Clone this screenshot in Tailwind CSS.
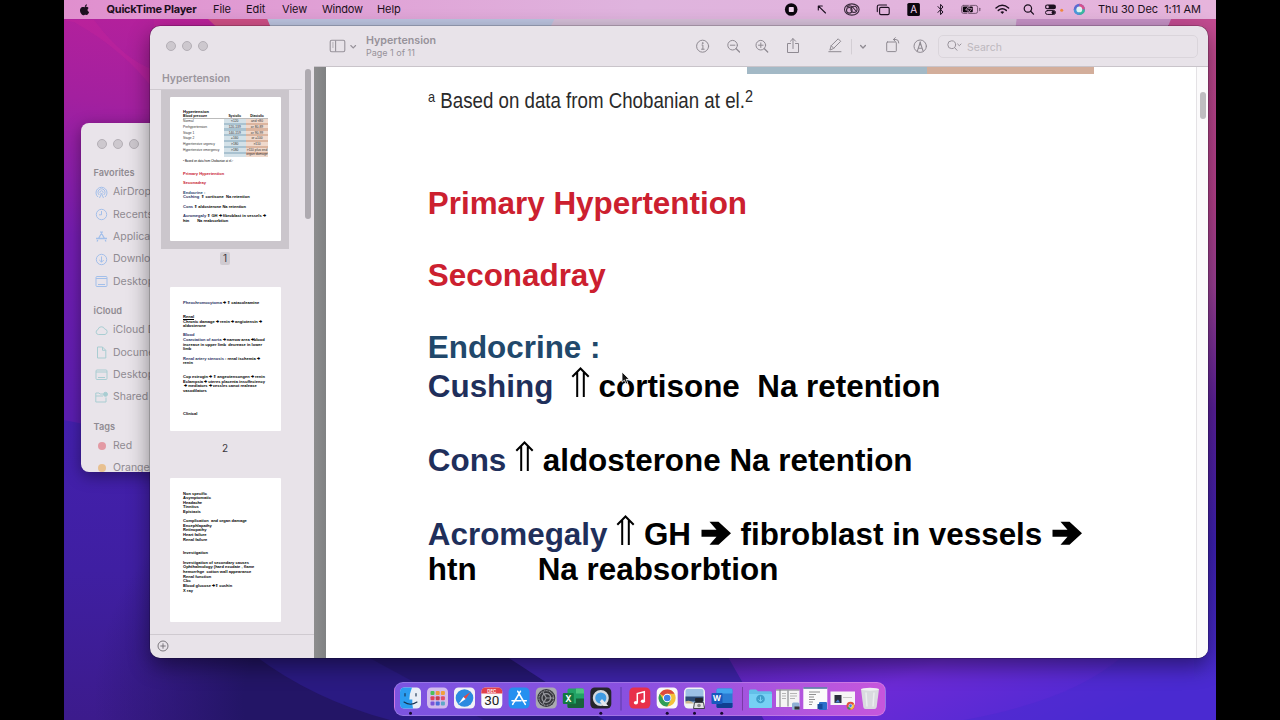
<!DOCTYPE html>
<html lang="en">
<head>
  <meta charset="UTF-8" />
  <meta name="viewport" content="width=device-width, initial-scale=1.0"/>
  <title>Hypertension</title>
  <script src="https://cdn.jsdelivr.net/npm/@tailwindcss/browser@4"></script>
</head>
<body class="bg-black w-[1280px] h-[720px] overflow-hidden font-['Inter',sans-serif]">

  <div class="relative w-[1152px] h-[720px] mx-auto overflow-hidden">

    <!-- Wallpaper -->
    <svg class="absolute inset-0" width="1152" height="720" viewBox="0 0 1152 720">
      <defs>
        <linearGradient id="left" x1="0.5" y1="0" x2="0.3" y2="1">
          <stop offset="0" stop-color="#bd219a"/>
          <stop offset="0.3" stop-color="#a3209f"/>
          <stop offset="0.6" stop-color="#741db0"/>
          <stop offset="1" stop-color="#5a1eb0"/>
        </linearGradient>
        <linearGradient id="low" x1="0" y1="0" x2="0" y2="1">
          <stop offset="0" stop-color="#4420ae"/>
          <stop offset="0.5" stop-color="#3f1fa2"/>
          <stop offset="1" stop-color="#3c1b8c"/>
        </linearGradient>
        <radialGradient id="shade" gradientUnits="userSpaceOnUse" cx="260" cy="700" r="230">
          <stop offset="0.35" stop-color="#231566" stop-opacity="1"/>
          <stop offset="1" stop-color="#231566" stop-opacity="0"/>
        </radialGradient>
        <linearGradient id="right" x1="0" y1="0" x2="0" y2="1">
          <stop offset="0" stop-color="#c34b91"/>
          <stop offset="0.3" stop-color="#b53f8c"/>
          <stop offset="0.42" stop-color="#9c3f96"/>
          <stop offset="0.6" stop-color="#5a1f9c"/>
          <stop offset="0.8" stop-color="#3d20b4"/>
          <stop offset="1" stop-color="#4a2cd0"/>
        </linearGradient>
        <linearGradient id="purple" x1="0" y1="0" x2="1" y2="0.3">
          <stop offset="0" stop-color="#5a22b4"/>
          <stop offset="0.45" stop-color="#6c2ad6"/>
          <stop offset="1" stop-color="#4a2ad2"/>
        </linearGradient>
      </defs>
      <rect width="1152" height="720" fill="#231566"/>
      <rect width="600" height="450" fill="url(#left)"/>
      <path d="M0 20 H30 Q60 60 90 70 V0 H200 V20 L230 90 H90 Q60 50 10 22 Z" fill="#c8249a" opacity=".35"/>
      <path d="M0 420 Q60 430 120 470 H340 V720 H0Z" fill="url(#low)"/>
      <rect y="470" width="500" height="250" fill="url(#shade)"/>
      <path d="M190 655 H440 L540 720 H326 Q250 700 190 655Z" fill="#2a1a82"/>
      <path d="M300 655 H440 L540 720 H420Z" fill="#231668" opacity=".6"/>
      <path d="M440 655 H670 L750 720 H540Z" fill="#3c22a4"/>
      <path d="M660 650 H1152 V720 H690Z" fill="url(#purple)"/>
      <path d="M660 650 L700 720 H600 V650Z" fill="#3c22a4"/>
      <path d="M1060 655 H1152 V720 H900 Q1010 700 1060 655Z" fill="#4a2ad0" opacity=".55"/>
      <rect x="1130" width="22" height="680" fill="url(#right)"/>
      <path d="M130 0 H260 V40 H170 Q140 20 130 0Z" fill="#cf4f86"/>
      <path d="M202 16 H560 V40 H212Z" fill="#bcc4e0"/>
      <path d="M500 0 H960 V40 H480Z" fill="#d5bfd8"/>
      <path d="M955 0 H1130 L1090 40 H950Z" fill="#c691c6"/>
      <path d="M1110 12 H1152 V60 H1090Z" fill="#c34b91"/>
    </svg>

    <!-- Menu bar -->
    <header class="relative flex items-center justify-between h-[19px] text-[11px] text-[#1c1020] bg-linear-to-r from-[#e08fce] via-[#dfb4de] to-[#e6b4dc]">
      <nav class="flex items-center pl-[15px] whitespace-nowrap tracking-[-0.1px]">
        <svg class="w-[27.500px] h-3 shrink-0" viewBox="0 0 28 12">
          <path d="M6 3.200 C7 2.600 8.600 2.500 9.800 3.900 C8.100 5 8.400 7.400 10.300 8.100 C9.600 10 8.600 11.300 7.500 11.200 C6.700 11 6.300 10.800 5.600 11 C4.500 11.500 3.800 11.700 2.800 10.600 C.8 8.300 .3 5.200 2.300 3.500 C3.600 2.600 4.800 3 6 3.200Z M5.900 2.800 C5.800 1.400 6.800 .3 8 .1 C8.200 1.500 7.200 2.700 5.900 2.800Z" fill="#1c1020"/>
        </svg>
        <span class="w-[106.500px] font-bold tracking-[-0.250px]">QuickTime Player</span>
        <span class="w-[33px]">File</span>
        <span class="w-[36px]">Edit</span>
        <span class="w-[40px]">View</span>
        <span class="w-[55px] tracking-[-0.250px]">Window</span>
        <span>Help</span>
      </nav>
      <div class="flex items-center pr-[15px] whitespace-nowrap">
        <svg width="314" height="19" viewBox="782 0 314 19" fill="none" stroke="#1c1020" stroke-width="1.100" stroke-linecap="round" stroke-linejoin="round">
          <circle cx="791.200" cy="9.500" r="6.300" fill="#0c060e" stroke="none"/>
          <rect x="788.800" y="7" width="5" height="5" rx=".8" fill="#f2d4ee" stroke="none"/>
          <path d="M825.500 13 L818.500 6.200 M818.300 10 V6 H822.300"/>
          <ellipse cx="851.800" cy="9.500" rx="7.300" ry="5.600" stroke="#3a2a3c"/>
          <circle cx="849.300" cy="10.300" r="2.800" stroke="#3a2a3c"/>
          <circle cx="854" cy="9.300" r="3.100" stroke="#3a2a3c"/>
          <path d="M847 7 Q850 4.500 853 7.500 L856 11" stroke="#3a2a3c"/>
          <rect x="879.600" y="7.400" width="9.600" height="7.200" rx="1.300"/>
          <path d="M877.300 11.600 V6.600 Q877.300 5 879 5 H886.500"/>
          <rect x="907.300" y="3" width="12.600" height="13" rx="1.600" fill="#0c060e" stroke="none"/>
          <path d="M938 6.600 L943 12 L940.600 14.600 V4.400 L943 7 L938 12.400" stroke-width="1"/>
          <rect x="961.600" y="5.400" width="16" height="8" rx="2" stroke="#6b4f6a" stroke-width=".9"/>
          <rect x="962.800" y="6.600" width="10" height="5.600" rx="1" fill="#0c060e" stroke="none"/>
          <path d="M979.800 8.300 V10.600" stroke="#6b4f6a"/>
          <path d="M969.800 4.600 L965.600 10 H968.400 L967.400 14.200 L972 8.600 H969Z" fill="#0c060e" stroke="#e4b4dc" stroke-width=".7"/>
          <path d="M996 8 Q1002.300 2.600 1008.600 8 M998.300 10.400 Q1002.300 7 1006.300 10.400" stroke-width="1.500"/>
          <path d="M1000.400 12 Q1002.300 10.500 1004.200 12 L1002.300 14Z" fill="#1c1020" stroke="none"/>
          <circle cx="1027.900" cy="8.500" r="3.700" stroke-width="1.200"/>
          <path d="M1030.700 11.300 L1033.500 14.100" stroke-width="1.300"/>
          <rect x="1045" y="4.600" width="11" height="4.600" rx="2.300" fill="#1c1020" stroke="none"/>
          <circle cx="1047.500" cy="6.900" r="1.300" fill="#e4b4dc" stroke="none"/>
          <rect x="1045.500" y="10.600" width="10" height="3.800" rx="1.900" stroke-width="1"/>
          <circle cx="1053.300" cy="12.500" r="1.700" fill="#1c1020" stroke="none"/>
          <circle cx="1061.700" cy="10.200" r="1.500" fill="#f0893c" stroke="none"/>
          <circle cx="1079.300" cy="9.400" r="5.600" fill="#5b6bd0" stroke="none"/>
          <path d="M1079.300 3.800 A5.600 5.600 0 0 1 1084.900 9.400 L1079.300 9.400Z" fill="#d64f8e" stroke="none"/>
          <path d="M1084.900 9.400 A5.600 5.600 0 0 1 1079.300 15 L1079.300 9.400Z" fill="#3cb9a0" stroke="none"/>
          <path d="M1079.300 15 A5.600 5.600 0 0 1 1073.700 9.400 L1079.300 9.400Z" fill="#4a9ad8" stroke="none"/>
          <circle cx="1079.300" cy="9.400" r="2.900" fill="#dff4f4" stroke="none"/>
          <text x="913.600" y="13.200" text-anchor="middle" font-size="10" fill="#f2d4ee" stroke="none">A</text>
        </svg>
        <span class="w-[105px] text-right whitespace-pre tracking-[-0.050px]">Thu 30 Dec  1:11 AM</span>
      </div>
    </header>

    <!-- Finder window -->
    <section class="absolute left-[17px] top-[123px] w-[120px] h-[349px] rounded-lg bg-[#e9e4ea] overflow-hidden shadow-[0_4px_16px_rgba(0,0,0,0.4)] text-[10.500px] text-[#908b92] whitespace-nowrap">
      <div class="flex gap-1.5 pl-[15.500px] pt-4">
        <i class="size-[10px] rounded-full bg-[#cdc8ce] border border-[#b4afb6]"></i>
        <i class="size-[10px] rounded-full bg-[#cdc8ce] border border-[#b4afb6]"></i>
        <i class="size-[10px] rounded-full bg-[#cdc8ce] border border-[#b4afb6]"></i>
      </div>
      <h3 class="mt-[16px] pl-[12.500px] h-[16px] leading-[16px] text-[9.200px] font-semibold">Favorites</h3>
      <ul class="stroke-[#a3bfea] fill-none">
        <li class="flex items-center h-[22.400px] pl-[14px] gap-[5px]"><svg class="size-[13px]" viewBox="0 0 13 13"><path d="M3 11 A5.500 5.500 0 1 1 10 11 M4.300 9 A3.500 3.500 0 1 1 8.700 9 M5.600 7.500 A1.500 1.500 0 1 1 7.400 7.500 M6.500 7.500 L4.500 12 M6.500 7.500 L8.500 12"/></svg>AirDrop</li>
        <li class="flex items-center h-[22.400px] pl-[14px] gap-[5px]"><svg class="size-[13px]" viewBox="0 0 13 13"><circle cx="6.500" cy="6.500" r="5.200"/><path d="M6.500 3 V6.800 H4"/></svg>Recents</li>
        <li class="flex items-center h-[22.400px] pl-[14px] gap-[5px]"><svg class="size-[13px]" viewBox="0 0 13 13"><path d="M5.500 1.500 L9.500 8.500 M7.500 1.500 L3.500 8.500 M1 8.500 H12 M2.800 10 L2 11.500 M10.200 10 L11 11.500" stroke-width="1.300"/></svg>Applications</li>
        <li class="flex items-center h-[22.400px] pl-[14px] gap-[5px]"><svg class="size-[13px]" viewBox="0 0 13 13"><circle cx="6.500" cy="6.500" r="5.200"/><path d="M6.500 3.500 V9 M4.300 7 L6.500 9.200 L8.700 7"/></svg>Downloads</li>
        <li class="flex items-center h-[22.400px] pl-[14px] gap-[5px]"><svg class="size-[13px]" viewBox="0 0 13 13"><rect x="1" y="1.500" width="11" height="10" rx="1"/><path d="M1 3.500 H12 M3 9.500 H10" stroke-width="1.200"/></svg>Desktop</li>
      </ul>
      <h3 class="mt-[10px] pl-[12.500px] h-[16px] leading-[16px] text-[9.200px] font-semibold">iCloud</h3>
      <ul class="stroke-[#a9cdd2] fill-none">
        <li class="flex items-center h-[22.400px] pl-[14px] gap-[5px]"><svg class="size-[13px]" viewBox="0 0 13 13"><path d="M3.300 10.500 A2.500 2.500 0 0 1 3 5.600 A3.500 3.500 0 0 1 9.700 5 A2.800 2.800 0 0 1 10 10.500Z"/></svg>iCloud Drive</li>
        <li class="flex items-center h-[22.400px] pl-[14px] gap-[5px]"><svg class="size-[13px]" viewBox="0 0 13 13"><path d="M2.500 1 H7.500 L10.800 4.300 V12 H2.500Z M7.500 1 V4.300 H10.800"/></svg>Documents</li>
        <li class="flex items-center h-[22.400px] pl-[14px] gap-[5px]"><svg class="size-[13px]" viewBox="0 0 13 13"><rect x="1" y="2" width="11" height="9.500" rx="1"/><path d="M1 4 H12 M3 9.500 H10" stroke-width="1.200"/></svg>Desktop</li>
        <li class="flex items-center h-[22.400px] pl-[14px] gap-[5px]"><svg class="size-[13px]" viewBox="0 0 13 13"><path d="M8 3 H5 L4 2 H.8 V11 H11 V6.500 M.8 5 H8"/><circle cx="10.500" cy="3.300" r="2" fill="#a9cdd2"/></svg>Shared</li>
      </ul>
      <h3 class="mt-[10px] pl-[12.500px] h-[16px] leading-[16px] text-[9.200px] font-semibold">Tags</h3>
      <ul>
        <li class="flex items-center h-[22.400px] pl-[16.500px] gap-[7.500px]"><i class="size-2 rounded-full bg-[#e39aa4]"></i>Red</li>
        <li class="flex items-center h-[22.400px] pl-[16.500px] gap-[7.500px]"><i class="size-2 rounded-full bg-[#e8c090]"></i>Orange</li>
      </ul>
    </section>

    <!-- Preview window -->
    <main class="absolute left-[86px] top-[26px] w-[1058px] h-[631.500px] rounded-[10px] overflow-hidden bg-[#e8e3e9] shadow-[0_0_0_0.500px_rgba(0,0,0,0.350),0_8px_22px_rgba(0,0,0,0.450)] flex">

      <!-- Sidebar -->
      <aside class="relative w-[164px] shrink-0 flex flex-col">
        <div class="flex gap-1.5 pl-[15.500px] pt-[15px] h-[41px]">
          <i class="size-[10px] rounded-full bg-[#cdc8ce] border border-[#b4afb6]"></i>
          <i class="size-[10px] rounded-full bg-[#cdc8ce] border border-[#b4afb6]"></i>
          <i class="size-[10px] rounded-full bg-[#cdc8ce] border border-[#b4afb6]"></i>
        </div>
        <h2 class="h-[23px] w-[152px] border-b border-[#cfcad0] pl-[12px] leading-[24px] text-[10.400px] font-semibold text-[#9b969d]">Hypertension</h2>
        <i class="absolute left-[154.500px] top-[43px] w-[6px] h-[150px] rounded-full bg-[#aeaab0]"></i>

        <div class="grow font-['Liberation_Sans',sans-serif] font-bold text-[4.050px] leading-[4.650px] text-black [&_p]:whitespace-pre">
          <div class="ml-[11px] w-[128px] h-[159px] bg-[#cbc6cc] pt-[7px] pl-[8.500px]">
            <div class="w-[111.500px] h-[144px] bg-white rounded-[1px] pl-[13.500px] pt-[13px]">
              <p class="h-[4px] leading-[4px]">Hypertension</p>
              <div class="grid grid-cols-[40.500px_22.500px_22px] text-[3.300px] leading-[5px] h-[5px] w-[85px] border-b border-[#bbb]">
                <span>Blood pressure</span><span class="text-center">Systolic</span><span class="text-center">Diastolic</span>
              </div>
              <div class="flex w-[85px] text-[3.300px] leading-[5.800px] font-normal text-[#333]">
                <div class="w-[40.500px]"><p>Normal</p><p>Prehypertension</p><p>Stage 1</p><p>Stage 2</p><p>Hypertensive urgency</p><p>Hypertensive emergency</p></div>
                <div class="w-[22.500px] h-[38px] text-center bg-[repeating-linear-gradient(#d3e1e8_0_3.500px,#a9c2d0_3.500px_5.800px)]"><p>&lt;120</p><p>120-139</p><p>140-159</p><p>≥160</p><p>&gt;180</p><p>&gt;180</p></div>
                <div class="w-[22px] h-[38px] text-center bg-[repeating-linear-gradient(#f0d9cc_0_3.500px,#dcb59f_3.500px_5.800px)]"><p>and &lt;80</p><p>or 80-89</p><p>or 90-99</p><p>or ≥100</p><p>&gt;110</p><p class="leading-[4.500px]">&gt;110 plus end</p><p class="leading-[4px]">organ damage</p></div>
              </div>
              <p class="mt-[1.500px] text-[2.900px] font-normal">ᵃ Based on data from Chobanian at el.²</p>
              <p class="mt-[8.900px] text-[#c8202f]">Primary Hypertention</p>
              <p class="mt-[4.700px] text-[#c8202f]">Seconadray</p>
              <p class="mt-[4.600px] text-[#1f466e]">Endocrine :</p>
              <p><span class="text-[#1f2f5e]">Cushing</span>  ⇑ cortisone  Na retention</p>
              <p class="mt-[4.800px]"><span class="text-[#1f2f5e]">Cons</span> ⇑ aldosterone Na retention</p>
              <p class="mt-[4.800px]"><span class="text-[#1f2f5e]">Acromegaly</span> ⇑ GH 🡺 fibroblast in vessels 🡺</p>
              <p>htn       Na reabsorbtion</p>
            </div>
          </div>
          <div class="flex h-[38px] pt-[3px] justify-center w-[150px] font-['Inter',sans-serif] font-normal text-[10px] text-[#3b383d]">
            <span class="h-[13px] px-[2.500px] rounded-[2px] bg-[#d0cbd1] leading-[13px]">1</span>
          </div>
          <div class="ml-[19.500px] w-[111.500px] h-[144px] bg-white rounded-[1px] pl-[13.500px] pt-[14px]">
            <p><span class="text-[#1f2f5e]">Pheochromocytoma</span> 🡺 ⇑ catacoleamine</p>
            <p class="mt-[9.300px] underline decoration-[0.500px]">Renal</p>
            <p>Chronic damage 🡺 renin 🡺 angiotensin 🡺</p>
            <p>aldosterone</p>
            <p class="mt-[4.400px] text-[#1f2f5e]">Blood</p>
            <p><span class="text-[#1f2f5e]">Coarctation of aorta</span> 🡺 narrow area 🡺blood</p>
            <p>increase in upper limb  decrease in lower</p>
            <p>limb</p>
            <p class="mt-[4.600px]"><span class="text-[#1f2f5e]">Renal artery stenosis</span> : renal ischemia 🡺</p>
            <p>renin</p>
            <p class="mt-[9.300px]">Cop estrogin 🡺 ⇑ angeotensongen 🡺 renin</p>
            <p>Eclampsia 🡺 uteres placenta insuffeciency</p>
            <p> 🡺 mediators 🡺 vessles canot realease</p>
            <p>vasodilators</p>
            <p class="mt-[18.400px]">Clinical</p>
          </div>
          <p class="h-[46.500px] w-[150px] text-center font-['Inter',sans-serif] font-normal text-[10px] leading-[34px] text-[#3b383d]">2</p>
          <div class="ml-[19.500px] w-[111.500px] h-[144px] bg-white rounded-[1px] pl-[13.500px] pt-[14px]">
            <p>Non specific</p>
            <p>Asymptomatic</p>
            <p>Headache</p>
            <p>Tinnitus</p>
            <p>Epistaxis</p>
            <p class="mt-[4.400px]">Complication  and organ damage</p>
            <p>Encephlapathy</p>
            <p>Retinopathy</p>
            <p>Heart failure</p>
            <p>Renal failure</p>
            <p class="mt-[9px]">Investigation</p>
            <p class="mt-[4.600px]">Investigation of secondary causes</p>
            <p>Ophthalmology (hard exudate , flame</p>
            <p>hemorrhge  cotton wall appearance</p>
            <p>Renal function</p>
            <p>Cbc</p>
            <p>Blood glucose 🡺⇑ cushin</p>
            <p>X ray</p>
          </div>
        </div>
        <div class="h-[23.500px] border-t border-[#cfcad0] pl-[7px] pt-[5px]">
          <svg class="size-3" viewBox="0 0 12 12" fill="none" stroke="#6f6b72" stroke-width=".9"><circle cx="6" cy="6" r="5"/><path d="M6 3.300 V8.700 M3.300 6 H8.700"/></svg>
        </div>
      </aside>

      <div class="grow flex flex-col">
        <!-- Toolbar -->
        <div class="flex items-center h-[41px] border-b border-[#c9c4ca] text-[#97929a]">
          <svg class="w-[52px] h-10 shrink-0" viewBox="314 26 52 40" fill="none" stroke="#97929a" stroke-width="1.100"><rect x="330.200" y="40.300" width="14.600" height="11.400" rx="1.500"/><path d="M335.600 40.500 V51.500"/><path d="M332 43 H333.800 M332 45 H333.800 M332 47 H333.800" stroke-width=".7"/><path d="M350.800 45.500 L353.200 48 L355.600 45.500" stroke-linecap="round"/></svg>
          <div class="w-[322px] pt-[1px] whitespace-nowrap">
            <h1 class="text-[10.700px] leading-[12px] font-semibold">Hypertension</h1>
            <p class="text-[9px] leading-[11px]">Page 1 of 11</p>
          </div>
          <svg class="w-[242px] h-10 shrink-0" viewBox="688 26 242 40" fill="none" stroke="#8f8a92" stroke-width="1" stroke-linecap="round" stroke-linejoin="round">
            <circle cx="702.600" cy="46.200" r="6"/><path d="M702 45 H702.900 V49.200 M701.500 49.200 H704.200"/><circle cx="702.600" cy="43.100" r=".4"/>
            <circle cx="732.600" cy="45.200" r="4.800"/><path d="M736.200 48.800 L739.500 52" stroke-width="1.300"/><path d="M730.300 45.200 H734.900"/>
            <circle cx="760.800" cy="45.200" r="4.800"/><path d="M764.400 48.800 L767.700 52" stroke-width="1.300"/><path d="M758.500 45.200 H763.100 M760.800 42.900 V47.500"/>
            <path d="M790.500 43.500 H787.500 V52.500 H798.500 V43.500 H795.500 M793 48.500 V38.700 M790.400 41.200 L793 38.600 L795.600 41.200"/>
            <path d="M830 49.700 L831.200 45.700 L838.200 38.800 L840.700 41.300 L833.700 48.300Z M831.200 45.700 L833.700 48.300 M828.800 51.700 H841"/>
            <path d="M851.500 39.500 V54" stroke="#d3ced4"/>
            <path d="M860.600 45.500 L863 48 L865.400 45.500" stroke-width="1.300"/>
            <rect x="886.700" y="42" width="9.600" height="9.600" rx=".8"/><path d="M893.500 39.500 H896 Q898.800 39.500 898.800 43 M895.300 37.700 L893.400 39.500 L895.300 41.300"/>
            <circle cx="920.200" cy="46.200" r="6.200"/><path d="M917.300 51.200 L920.200 42.300 L923.100 51.200 M918.500 48.300 H921.900" stroke-width="1.100"/><path d="M920.200 41.800 V45"/>
          </svg>
          <div class="ml-2 w-[260px] h-[23px] rounded-[5px] border border-[#dad5db] flex items-center pl-2 gap-[5px] text-[10.500px] text-[#bdb8be]">
            <svg class="w-[15px] h-3 shrink-0" viewBox="0 0 15 12" fill="none" stroke="#97929a" stroke-width="1" stroke-linecap="round"><circle cx="4.700" cy="4.700" r="3.900"/><path d="M7.600 7.600 L10 10.300 M10.600 4 L12.300 5.700 L14 4"/></svg>
            <span class="pt-[3px]">Search</span>
          </div>
        </div>

        <!-- Document -->
        <div class="flex grow">
          <div class="w-3 bg-linear-to-r from-[#8d8d8e] to-[#808283]"></div>
          <article class="w-[870px] bg-white font-['Liberation_Sans',sans-serif] text-black [&_p]:whitespace-pre">
            <div class="flex h-[6.500px] pl-[420.500px]"><i class="w-[180.500px] bg-[#a3b9c6]"></i><i class="w-[167px] bg-[#d3ae9b]"></i></div>
            <p class="relative pl-[102px] mt-[13px] h-[28px] text-[#2a2a2a]"><span class="absolute origin-left scale-x-[0.850] text-[22px] leading-[28px]"><span class="text-[15px] relative -top-[6px]">a</span> Based on data from Chobanian at el.<span class="text-[17px] relative -top-[6px]">2</span></span></p>
            <div class="pl-[101.800px] text-[31.400px] leading-[36px] font-bold [&>p]:h-[36px]">
              <p class="mt-[71px] text-[#cc202f]">Primary Hypertention</p>
              <p class="mt-[36px] text-[#cc202f]">Seconadray</p>
              <p class="mt-[36px] text-[#21486b]">Endocrine :</p>
              <p class="mt-[1px]"><span class="text-[#1f2f5b]">Cushing</span>  <svg class="inline w-[19px] h-[30px] align-baseline" viewBox="0 0 19 30" fill="none" stroke="#000" stroke-width="2"><path d="M1.300 9.700 L9.500 1.500 L17.700 9.700 M6.200 30 V5.500 M12.800 30 V5.500"/></svg> cortisone  Na retention</p>
              <p class="mt-[38px]"><span class="text-[#1f2f5b]">Cons</span> <svg class="inline w-[19px] h-[30px] align-baseline" viewBox="0 0 19 30" fill="none" stroke="#000" stroke-width="2"><path d="M1.300 9.700 L9.500 1.500 L17.700 9.700 M6.200 30 V5.500 M12.800 30 V5.500"/></svg> aldosterone Na retention</p>
              <p class="mt-[38.500px]"><span class="text-[#1f2f5b]">Acromegaly</span> <svg class="inline w-[19px] h-[30px] align-baseline" viewBox="0 0 19 30" fill="none" stroke="#000" stroke-width="2"><path d="M1.300 9.700 L9.500 1.500 L17.700 9.700 M6.200 30 V5.500 M12.800 30 V5.500"/></svg> GH <svg class="inline w-[32px] h-[24px] align-baseline" viewBox="0 0 32 24"><path d="M1.500 8.700 H16.500 L9.500 0.700 H18.500 L31 12.200 L18.500 23.700 H9.500 L16.500 15.700 H1.500Z"/></svg> fibroblast in vessels <svg class="inline w-[32px] h-[24px] align-baseline" viewBox="0 0 32 24"><path d="M1.500 8.700 H16.500 L9.500 0.700 H18.500 L31 12.200 L18.500 23.700 H9.500 L16.500 15.700 H1.500Z"/></svg></p>
              <p class="mt-[1px]">htn       Na reabsorbtion</p>
            </div>
          </article>
          <div class="grow bg-[#fbfafb] border-l border-[#e4e2e5] pt-[25px] pl-[2.500px]"><i class="block w-[6px] h-[27px] rounded-full bg-[#bfbdc0]"></i></div>
        </div>
      </div>
    </main>

    <!-- Pointer -->
    <svg class="absolute left-[557px] top-[371px]" width="10" height="15" viewBox="0 0 10 15"><path d="M1 1 L8.300 8.300 H5.200 L6.800 12.300 L5 13 L3.400 9.100 L1 11.200Z" fill="#111" stroke="#fff" stroke-width=".8"/></svg>

    <!-- Dock -->
    <footer class="absolute left-[330px] top-[681.500px] w-[492px] h-[34.500px] rounded-[9px] bg-linear-to-r from-[#7c54e0] via-[#8a50e0] to-[#c756dc] border border-white/20">
      <svg width="490" height="33" viewBox="395 682.500 490 33">
        <!-- Finder -->
        <rect x="400" y="687" width="21" height="21" rx="4.500" fill="#e8eef6"/>
        <path d="M404.500 687 H412 Q409.500 693 409.300 699 H412.300 Q412 704 413 708 H404.500 Q400 708 400 703.500 V691.500 Q400 687 404.500 687Z" fill="#2b9df0"/>
        <path d="M405 693 V695.500 M416 693 V695.500 M404 701.500 Q410.500 706 417 701.500" stroke="#16324f" stroke-width="1.100" fill="none" stroke-linecap="round"/>
        <!-- Launchpad -->
        <rect x="427" y="687" width="21" height="21" rx="4.500" fill="#d2bcec"/>
        <g>
          <rect x="430.500" y="690.500" width="4" height="4" rx="1" fill="#4bc057"/><rect x="435.700" y="690.500" width="4" height="4" rx="1" fill="#f09a3c"/><rect x="440.900" y="690.500" width="4" height="4" rx="1" fill="#f0a03c"/>
          <rect x="430.500" y="695.700" width="4" height="4" rx="1" fill="#e0405a"/><rect x="435.700" y="695.700" width="4" height="4" rx="1" fill="#c83c50"/><rect x="440.900" y="695.700" width="4" height="4" rx="1" fill="#e0506a"/>
          <rect x="430.500" y="700.900" width="4" height="4" rx="1" fill="#7a54d8"/><rect x="435.700" y="700.900" width="4" height="4" rx="1" fill="#4a6ad8"/><rect x="440.900" y="700.900" width="4" height="4" rx="1" fill="#5fa8c8"/>
        </g>
        <!-- Safari -->
        <rect x="454" y="687" width="21" height="21" rx="4.500" fill="#f1f2f6"/><circle cx="464.500" cy="697.500" r="8.800" fill="#2b8ae0"/>
        <path d="M470.500 691.500 L465.600 698.600 L463.400 696.400Z" fill="#e8483f"/><path d="M458.500 703.500 L463.400 696.400 L465.600 698.600Z" fill="#fff"/>
        <!-- Calendar -->
        <rect x="481.300" y="687" width="21" height="21" rx="4.500" fill="#fafafa"/><path d="M481.300 693 V691.500 Q481.300 687 485.800 687 H497.800 Q502.300 687 502.300 691.500 V693Z" fill="#e2414a"/>
        <text x="491.800" y="692" text-anchor="middle" font-size="4.300" font-weight="600" fill="#fff">DEC</text>
        <text x="491.800" y="704.900" text-anchor="middle" font-size="13.500" font-weight="400" font-family="Roboto" fill="#222">30</text>
        <!-- App Store -->
        <rect x="508.600" y="687" width="21" height="21" rx="4.500" fill="#2590f0"/>
        <path d="M517.800 690.800 L523.800 701.500 M520.400 690.800 L514.200 701.500 M512 700.300 H521 M523.200 700.300 H526.300 M513.300 702.700 L512.700 703.900 M524.600 702.700 L525.300 703.900" stroke="#fff" stroke-width="1.600" stroke-linecap="round"/>
        <!-- System Preferences -->
        <rect x="535.800" y="687" width="21" height="21" rx="4.500" fill="#a9aab0"/><circle cx="546.300" cy="697.500" r="9" fill="#36373c"/><circle cx="546.300" cy="697.500" r="7.300" fill="none" stroke="#9a9ba1" stroke-width="1.200" stroke-dasharray="1 .6"/><circle cx="546.300" cy="697.500" r="4.300" fill="none" stroke="#9a9ba1" stroke-width="1.300"/><path d="M546.300 697.500 H553 M546.300 697.500 L543 691.700 M546.300 697.500 L543 703.300" stroke="#9a9ba1" stroke-width="1.200"/>
        <!-- Excel -->
        <rect x="567.500" y="688" width="16.500" height="19.500" rx="1.500" fill="#22a366"/><path d="M576 688 H582.500 Q584 688 584 689.500 V693 H576Z" fill="#4cc47f"/><path d="M576 698 H584 V706 Q584 707.500 582.500 707.500 H569 Q567.500 707.500 567.500 706 V703 H576Z" fill="#17633b"/>
        <rect x="562.800" y="692.500" width="11" height="11" rx="1" fill="#137a40"/><text x="568.300" y="701" text-anchor="middle" font-size="8.500" font-weight="700" fill="#fff">X</text>
        <!-- QuickTime -->
        <rect x="590.300" y="687" width="21" height="21" rx="4.500" fill="#24262b"/><circle cx="600.800" cy="697.500" r="6.800" fill="#3f9be4" stroke="#d3d8df" stroke-width="2.400"/><path d="M602 698.500 L608.300 705.500 H603.500 L599.800 701Z" fill="#e4e7ec"/>
        <path d="M621 686.500 V710" stroke="#5a3aa8"/>
        <!-- Music -->
        <rect x="629.300" y="687" width="21" height="21" rx="4.500" fill="#e8304a"/><path d="M637.300 702 V693 L644.300 691.300 V700.500" fill="none" stroke="#fff" stroke-width="1.500"/><ellipse cx="635.900" cy="702.300" rx="2.100" ry="1.700" fill="#fff"/><ellipse cx="642.900" cy="700.800" rx="2.100" ry="1.700" fill="#fff"/>
        <!-- Chrome -->
        <rect x="656.700" y="687" width="21" height="21" rx="4.500" fill="#f8f8f8"/><circle cx="667.200" cy="697.500" r="8.500" fill="#f3c13a"/><path d="M667.200 697.500 L659.800 693.200 A8.500 8.500 0 0 1 674.600 693.200 L667.200 693.200Z" fill="#dc4a3d"/><path d="M659.800 693.200 A8.500 8.500 0 0 0 667.200 706 L670.900 699.600 L663.500 699.600Z" fill="#2f9e56"/><circle cx="667.200" cy="697.500" r="4.200" fill="#fff"/><circle cx="667.200" cy="697.500" r="3.300" fill="#3f80e8"/>
        <!-- Preview -->
        <rect x="684" y="687" width="21" height="21" rx="4.500" fill="#f2f3f5"/><rect x="685.500" y="688.500" width="18" height="14" rx="2" fill="#9cc0e4"/><path d="M685.500 696 H703.500 V701 H685.500Z" fill="#2c4a74"/><path d="M685.500 701 Q690 699 694 703 H685.500Z" fill="#ccb58c"/><rect x="695" y="697.500" width="8" height="4" rx="1" fill="#22252b"/><path d="M694.500 702 H703.500 L704.500 708 H693.500Z" fill="#e2e2e2" stroke="#33363c" stroke-width=".9"/><circle cx="699" cy="705" r="1.800" fill="#888"/>
        <!-- Word -->
        <rect x="716.500" y="688" width="16" height="19.500" rx="1.500" fill="#2b7cd3"/><path d="M718 688 H731 Q732.500 688 732.500 689.500 V693 H716.500 V689.500 Q716.500 688 718 688Z" fill="#41a5ee"/><path d="M716.500 702.500 H732.500 V706 Q732.500 707.500 731 707.500 H718 Q716.500 707.500 716.500 706Z" fill="#103f91"/>
        <rect x="711.500" y="692.500" width="11" height="11" rx="1" fill="#185abd"/><text x="717" y="700.900" text-anchor="middle" font-size="8" font-weight="700" fill="#fff">W</text>
        <path d="M742.500 686.500 V710" stroke="#7a3aa8"/>
        <!-- Downloads -->
        <path d="M749 690.500 Q749 689 750.500 689 H756 L758 690.700 H770.500 Q772 690.700 772 692.200 V706 Q772 707.500 770.500 707.500 H750.500 Q749 707.500 749 706Z" fill="#62bfe8"/><path d="M749 693.500 H772 V706 Q772 707.500 770.500 707.500 H750.500 Q749 707.500 749 706Z" fill="#76d0f4"/><circle cx="760.500" cy="698.500" r="4.300" fill="#3f9fcb"/><path d="M760.500 696 V700.700 M758.500 698.900 L760.500 700.900 L762.500 698.900" stroke="#76d0f4" fill="none"/>
        <!-- Minimised windows -->
        <rect x="776" y="689" width="23.500" height="17.500" fill="#f4f4f4"/><path d="M776 689.500 H799.500 M780 689 V706.500 M788 690 V706" stroke="#77787c"/><path d="M782 693 H786 M782 695.500 H786 M782 698 H786 M790 693 H797 M790 695.500 H797 M790 698 H795" stroke="#999" stroke-width=".7"/><rect x="792" y="702" width="7.500" height="7.500" rx="1.500" fill="#8fb0d4"/><path d="M794.500 706 H799.500 V709 H794.500Z" fill="#333"/>
        <rect x="803.300" y="687" width="24" height="21.500" fill="#fbfbfb"/><path d="M803.300 687.500 H827.300" stroke="#4a6c9c" stroke-width="1.500"/><path d="M809 691.500 H820 M809 694 H816 M809 696.500 H814 M809 699 H815 M809 701.500 H813 M809 704 H812" stroke="#777" stroke-width=".8"/><rect x="819" y="701.500" width="8" height="8" rx="1" fill="#2b6fca"/><rect x="817.500" y="703.500" width="5" height="5" fill="#174a9c"/>
        <rect x="830.500" y="691" width="24.500" height="13.500" fill="#f6f6f6"/><rect x="834.500" y="694.500" width="7" height="8" fill="#2b2f3c"/><path d="M835 702 L838 699 L840 702Z" fill="#4b82d8"/><path d="M843 697 H852" stroke="#c8c8c8"/><circle cx="850.500" cy="705.300" r="4" fill="#e04f3e"/><path d="M850.500 705.300 L847 707.300 A4 4 0 0 0 850.500 709.300Z" fill="#35a35c"/><path d="M850.500 709.300 A4 4 0 0 0 854 703.500 L850.500 705.300Z" fill="#f0c23c"/><circle cx="850.500" cy="705.300" r="1.700" fill="#3f80e8" stroke="#fff" stroke-width=".5"/>
        <!-- Trash -->
        <path d="M861 688.500 H879 L876.700 706.500 Q876.400 708.500 874.400 708.500 H865.600 Q863.600 708.500 863.300 706.500Z" fill="#d9dbdf"/><ellipse cx="870" cy="688.700" rx="9" ry="1.500" fill="#f0f1f3"/><path d="M866 692 L867 706 M874 692 L873 706" stroke="#eceef0" stroke-width="1.500"/>
        <!-- Running dots -->
        <g fill="#160a30"><circle cx="410.500" cy="712.700" r="1.500"/><circle cx="600.800" cy="712.700" r="1.500"/><circle cx="667.200" cy="712.700" r="1.500"/><circle cx="694.500" cy="712.700" r="1.500"/><circle cx="721.700" cy="712.700" r="1.500"/></g>
      </svg>
    </footer>
  </div>
</body>
</html>
